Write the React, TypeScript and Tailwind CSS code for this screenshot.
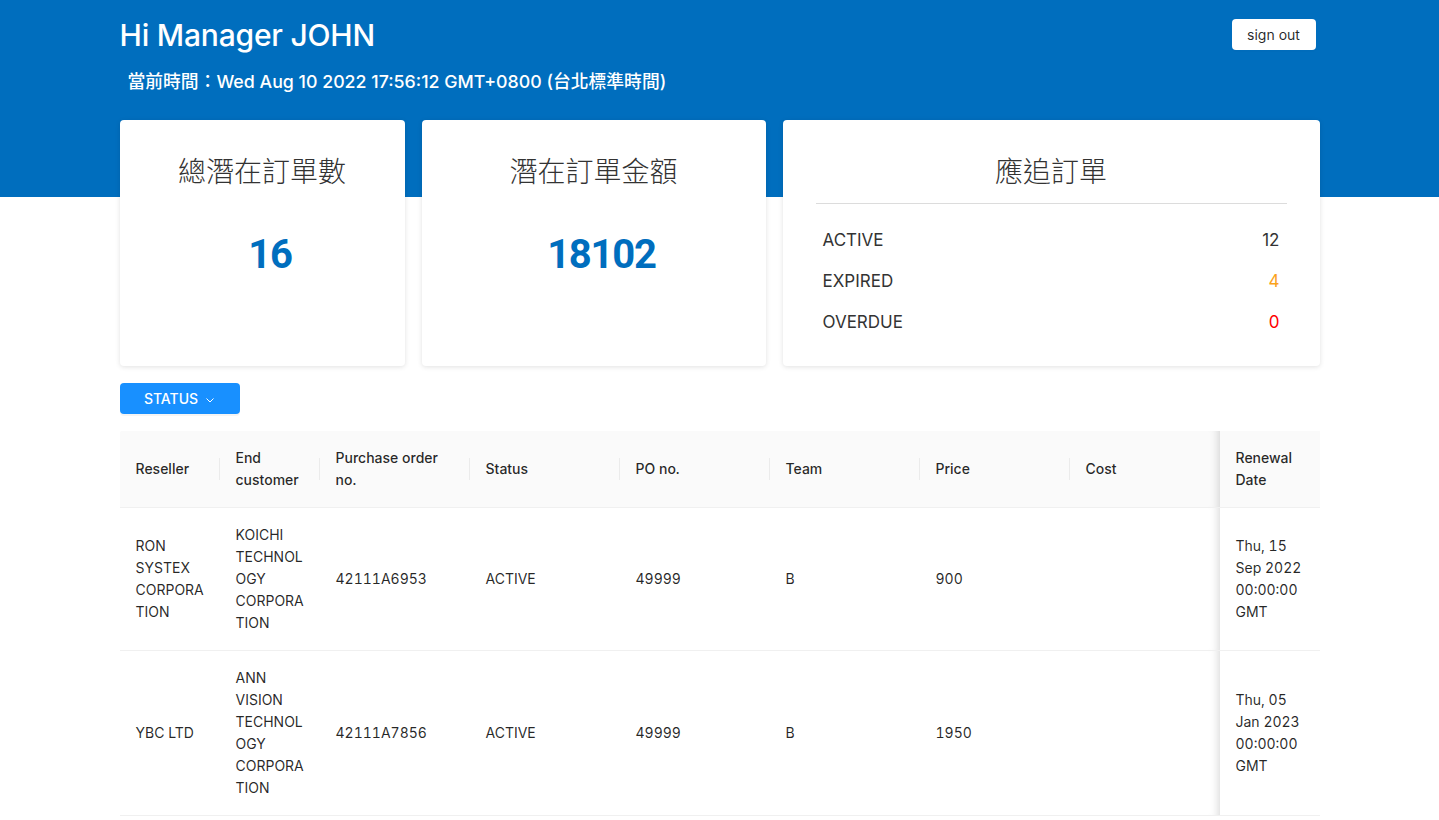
import React from "react";

const columns = [
  { key: "reseller", title: ["Reseller"], w: "w-[100px]" },
  { key: "end", title: ["End", "customer"], w: "w-[100px]" },
  { key: "po", title: ["Purchase order", "no."], w: "w-[150px]" },
  { key: "status", title: ["Status"], w: "w-[150px]" },
  { key: "pono", title: ["PO no."], w: "w-[150px]" },
  { key: "team", title: ["Team"], w: "w-[150px]" },
  { key: "price", title: ["Price"], w: "w-[150px]" },
  { key: "cost", title: ["Cost"], w: "w-[150px]" },
];

const rows: Record<string, string[]>[] = [
  {
    reseller: ["RON", "SYSTEX", "CORPORA", "TION"],
    end: ["KOICHI", "TECHNOL", "OGY", "CORPORA", "TION"],
    po: ["42111A6953"],
    status: ["ACTIVE"],
    pono: ["49999"],
    team: ["B"],
    price: ["900"],
    cost: [],
    renewal: ["Thu, 15", "Sep 2022", "00:00:00", "GMT"],
  },
  {
    reseller: ["YBC LTD"],
    end: ["ANN", "VISION", "TECHNOL", "OGY", "CORPORA", "TION"],
    po: ["42111A7856"],
    status: ["ACTIVE"],
    pono: ["49999"],
    team: ["B"],
    price: ["1950"],
    cost: [],
    renewal: ["Thu, 05", "Jan 2023", "00:00:00", "GMT"],
  },
];

function Lines({ lines }: { lines: string[] }) {
  return (
    <>
      {lines.map((l, i) => (
        <span key={i} className="block">
          {l}
        </span>
      ))}
    </>
  );
}

export default function App() {
  const sans = "font-['Inter','Noto_Sans_CJK_TC',sans-serif]";
  return (
    <div
      className={`${sans} min-h-[820px] bg-[linear-gradient(to_bottom,#006ebe_197px,#ffffff_197px)] text-[#000000d9]`}
    >
      <div className="mx-auto w-[1200px] pt-[16px]">
        {/* header */}
        <div className="flex items-start justify-between">
          <h1 className="text-[30px] leading-[38px] font-medium text-white tracking-[-0.2px]">
            Hi Manager JOHN
          </h1>
          <button className="mt-[3px] mr-[4px] h-[31px] w-[84px] rounded-[4px] bg-white text-[14px] text-[#000000d9] shadow-[0_2px_0_rgba(0,0,0,0.015)]">
            sign out
          </button>
        </div>
        <div className="mt-[15px] pl-[8px] text-[17.8px] leading-[26px] font-medium text-white">
          當前時間：Wed Aug 10 2022 17:56:12 GMT+0800 (台北標準時間)
        </div>

        {/* cards */}
        <div className="mt-[25px] flex gap-[17px]">
          <div className="flex h-[246px] w-[285px] flex-col items-center rounded-[4px] bg-white pt-[30px] shadow-[0_1px_5px_rgba(0,0,0,0.12)]">
            <div className="font-['Noto_Sans_CJK_TC',sans-serif] text-[28px] leading-[40px] font-light text-[#333]">
              總潛在訂單數
            </div>
            <div className="mt-[41px] pl-[16px] font-['Roboto',sans-serif] text-[40px] leading-[48px] font-bold tracking-[-1.2px] text-[#006ebe]">
              16
            </div>
          </div>
          <div className="flex h-[246px] w-[344px] flex-col items-center rounded-[4px] bg-white pt-[30px] shadow-[0_1px_5px_rgba(0,0,0,0.12)]">
            <div className="font-['Noto_Sans_CJK_TC',sans-serif] text-[28px] leading-[40px] font-light text-[#333]">
              潛在訂單金額
            </div>
            <div className="mt-[41px] pl-[16px] font-['Roboto',sans-serif] text-[40px] leading-[48px] font-bold tracking-[-1.2px] text-[#006ebe]">
              18102
            </div>
          </div>
          <div className="flex h-[246px] flex-1 flex-col rounded-[4px] bg-white px-[33px] pt-[30px] shadow-[0_1px_5px_rgba(0,0,0,0.12)]">
            <div className="text-center font-['Noto_Sans_CJK_TC',sans-serif] text-[28px] leading-[40px] font-light text-[#333]">
              應追訂單
            </div>
            <div className="mt-[13px] h-px bg-[#dcdcdc]" />
            <div className="mt-[24px] flex flex-col gap-[17px] px-[7px] text-[17px] leading-[24px] text-[#333]">
              <div className="flex justify-between">
                <span>ACTIVE</span>
                <span>12</span>
              </div>
              <div className="flex justify-between">
                <span>EXPIRED</span>
                <span className="text-[#faa21b]">4</span>
              </div>
              <div className="flex justify-between">
                <span>OVERDUE</span>
                <span className="text-[#ff0000]">0</span>
              </div>
            </div>
          </div>
        </div>

        {/* status dropdown */}
        <div className="mt-[17px]">
          <button className="flex h-[31px] w-[120px] items-center justify-center gap-[7px] rounded-[4px] bg-[#1890ff] text-[14px] font-medium text-white shadow-[0_2px_0_rgba(0,0,0,0.045)]">
            <span>STATUS</span>
            <svg width="10" height="10" viewBox="0 0 10 10" fill="none" className="mt-[2px]">
              <path d="M1.5 3.5 L5 7 L8.5 3.5" stroke="white" strokeWidth="1" />
            </svg>
          </button>
        </div>

        {/* table */}
        <div className="mt-[17px]">
          <table className="w-[1200px] table-fixed border-collapse text-left text-[14px] leading-[22px] tabular-nums">
            <thead>
              <tr className="bg-[#fafafa]">
                {columns.map((c, i) => (
                  <th
                    key={c.key}
                    className={`${c.w} relative border-b border-[#f0f0f0] px-[16px] py-[16px] align-middle font-medium ${
                      i === 0 ? "rounded-tl-[2px]" : ""
                    }`}
                  >
                    <Lines lines={c.title} />
                    {i < columns.length - 1 && (
                      <span className="absolute top-1/2 right-0 h-[22px] w-px -translate-y-1/2 bg-[#0000000f]" />
                    )}
                  </th>
                ))}
                <th className="relative w-[100px] border-b border-[#f0f0f0] bg-[#fafafa] px-[16px] py-[16px] align-middle font-medium before:absolute before:top-0 before:bottom-0 before:left-[-30px] before:w-[30px] before:shadow-[inset_-10px_0_8px_-8px_rgba(0,0,0,0.15)] before:content-['']">
                  <Lines lines={["Renewal", "Date"]} />
                </th>
              </tr>
            </thead>
            <tbody>
              {rows.map((r, ri) => (
                <tr key={ri}>
                  {columns.map((c) => (
                    <td
                      key={c.key}
                      className="border-b border-[#f0f0f0] px-[16px] py-[16px] align-middle"
                    >
                      <Lines lines={r[c.key]} />
                    </td>
                  ))}
                  <td className="relative border-b border-[#f0f0f0] bg-white px-[16px] py-[16px] align-middle before:absolute before:top-0 before:bottom-0 before:left-[-30px] before:w-[30px] before:shadow-[inset_-10px_0_8px_-8px_rgba(0,0,0,0.15)] before:content-['']">
                    <Lines lines={r.renewal} />
                  </td>
                </tr>
              ))}
            </tbody>
          </table>
        </div>
      </div>
    </div>
  );
}
